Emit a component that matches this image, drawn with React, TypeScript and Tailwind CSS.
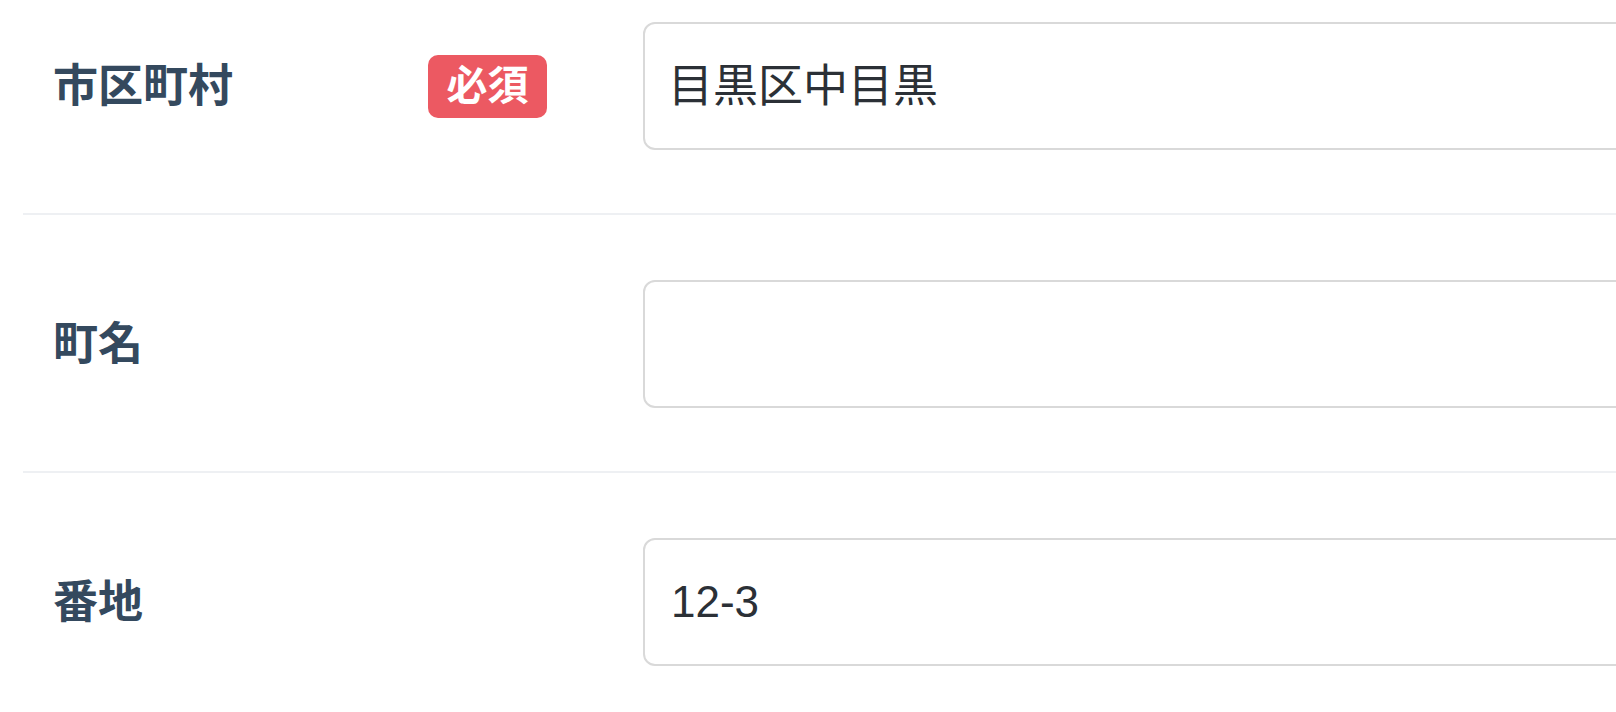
import React from "react";

const font = { fontFamily: '"Liberation Sans", "Noto Sans CJK JP", sans-serif' };

function Row({ label, required, value, cjk }: { label: string; required?: boolean; value: string; cjk?: boolean }) {
  return (
    <div className="flex items-center border-b-2 border-[#eef0f3] pb-[63px] pl-[30px] pt-[65px]">
      <div className="flex w-[494px] shrink-0 items-center justify-between">
        <span className="text-[45px] font-bold leading-none text-[#34495e]">{label}</span>
        {required && (
          <span className="flex h-[63px] w-[119px] items-center justify-center rounded-[10px] bg-[#ec5962] text-[41px] font-bold leading-none text-white">
            必須
          </span>
        )}
      </div>
      <div className="ml-[96px] flex h-[128px] flex-1 items-center rounded-[12px] border-2 border-[#d9d9d9] bg-white pl-[26px]">
        <span className={cjk ? "-ml-[3px] text-[45px] leading-none text-[#2b3036]" : "text-[44px] leading-none text-[#2b3036]"}>{value}</span>
      </div>
    </div>
  );
}

export default function App() {
  return (
    <div className="h-[712px] w-full overflow-hidden bg-white" style={font}>
      <div className="ml-[23px] mt-[-45px] w-[1700px]">
        <div className="h-[2px] bg-[#eef0f3]" />
        <Row label="市区町村" required value="目黒区中目黒" cjk />
        <Row label="町名" value="" />
        <Row label="番地" value="12-3" />
      </div>
    </div>
  );
}
